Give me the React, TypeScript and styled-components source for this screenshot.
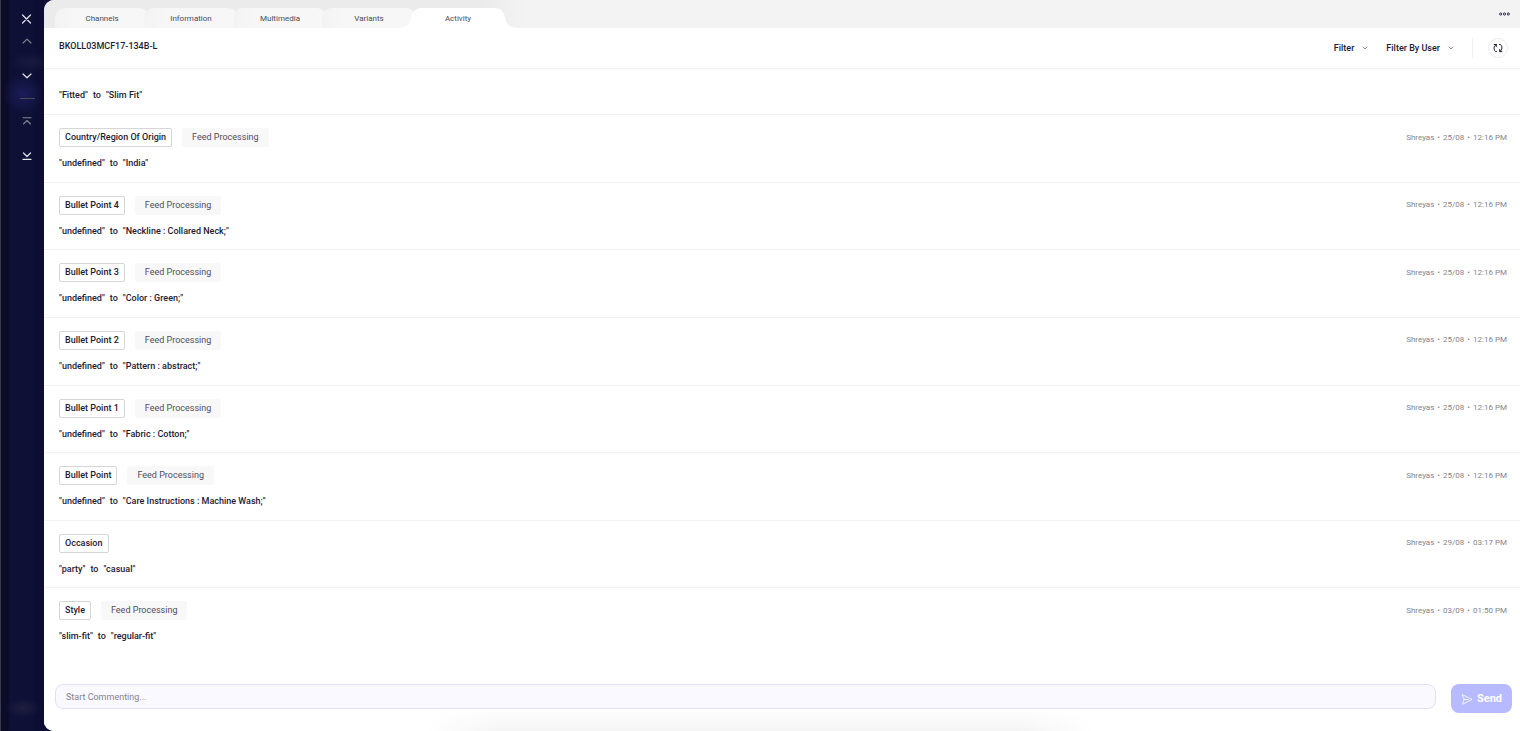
import React from 'react';
import styled, { createGlobalStyle, css } from 'styled-components';

const GlobalStyle = createGlobalStyle`
  * { box-sizing: border-box; }
  body { margin: 0; background: #0e1036; }
  body, button, input, select {
    font-family: Roboto, "Liberation Sans", sans-serif;
    font-size: 9px;
    color: #1d1a33;
  }
  button { border: 0; padding: 0; background: none; cursor: pointer; }
`;

const Page = styled.div`
  display: flex;
  min-height: 100vh;
  background: #101036;
`;

const Rail = styled.nav`
  display: flex;
  flex: none;
  flex-direction: column;
  align-items: center;
  width: 44px;
  padding: 13px 0 0 9px;
  border-left: 1px solid #3b3b4b;
  background:
    radial-gradient(circle 20px at 22px 94px, #1b1d58, transparent),
    radial-gradient(ellipse 22px 10px at 30px 62px, #1a1a3e, transparent),
    radial-gradient(ellipse 18px 10px at 22px 708px, #1e1e3e, transparent),
    linear-gradient(90deg, #0d0c28 0 7px, #0e1036 10px 32px, #0d0d33 36px);
`;

const RailButton = styled.button<{ $dim?: boolean; $gap: number }>`
  display: flex;
  align-items: center;
  justify-content: center;
  width: 16px;
  height: 12px;
  margin-bottom: ${(p) => p.$gap}px;
  color: ${(p) => (p.$dim ? '#85858f' : '#e4e4ea')};
`;

const RailRule = styled.hr`
  width: 15px;
  margin: 0 0 16px;
  border: 0;
  border-top: 1px solid #4a4a54;
`;

const Panel = styled.main`
  display: flex;
  flex: 1;
  flex-direction: column;
  min-width: 0;
  overflow: hidden;
  border-radius: 10px 0 0 10px;
  background: #fff;
`;

const TabBar = styled.div`
  display: flex;
  align-items: center;
  justify-content: space-between;
  height: 28px;
  padding: 0 10px 0 11px;
  background: linear-gradient(90deg, #ebebeb 0 440px, #f3f3f3 480px);
`;

const Tabs = styled.div`
  display: flex;
  align-self: flex-end;
  height: 20px;
`;

const activeTab = css`
  z-index: 1;
  background: #fff;
  &::before, &::after {
    content: "";
    position: absolute;
    bottom: 0;
    width: 10px;
    height: 10px;
  }
  &::before {
    left: -10px;
    background: radial-gradient(circle at 0 0, transparent 9px, #fff 10px);
  }
  &::after {
    right: -10px;
    background: radial-gradient(circle at 100% 0, transparent 9px, #fff 10px);
  }
`;

const Tab = styled.button<{ $active?: boolean }>`
  position: relative;
  width: 94px;
  margin-right: -5px;
  border-radius: 10px 10px 0 0;
  background: linear-gradient(90deg, #f3f3f3, #f7f7f7 20px);
  font-size: 8px;
  color: #4b4a58;
  ${(p) => p.$active && activeTab}
`;

const MoreButton = styled.button`
  display: flex;
  color: #2f2b44;
`;

const Header = styled.header`
  display: flex;
  justify-content: space-between;
  height: 41px;
  padding: 0 12px 0 15px;
  border-bottom: 1px solid #f1f1f3;
`;

const Sku = styled.h1`
  margin: 0;
  padding-top: 10px;
  font-size: 9px;
  font-weight: 500;
  line-height: 16px;
`;

const Tools = styled.div`
  display: flex;
  align-items: center;
`;

const FilterButton = styled.button`
  display: flex;
  align-items: center;
  gap: 8px;
  margin-right: 18px;
  font-weight: 500;
  svg { color: #6f6d7c; }
`;

const RefreshButton = styled.button`
  display: flex;
  align-items: center;
  justify-content: center;
  width: 20px;
  height: 20px;
  border: 1px solid #ececef;
  border-radius: 50%;
`;

const ToolRule = styled.span`
  width: 1px;
  height: 20px;
  margin-right: 15px;
  background: #f0f0f2;
`;

const List = styled.ul`
  display: flex;
  flex: 1;
  flex-direction: column;
  margin: 0;
  padding: 0;
  list-style: none;
`;

const PartialEntry = styled.li`
  padding: 18px 15px 11px;
  border-bottom: 1px solid #f1f1f3;
`;

const Entry = styled.li`
  flex: 1;
  padding: 13px 13px 10px 15px;
  border-bottom: 1px solid #f1f1f3;
  &:last-child { border-bottom: 0; }
`;

const EntryHead = styled.div`
  display: flex;
  align-items: center;
  gap: 10px;
  height: 19px;
  margin-bottom: 8px;
`;

const Field = styled.span`
  padding: 0 5px;
  border: 1px solid #d5d5da;
  border-radius: 2px;
  font-weight: 500;
  line-height: 17px;
`;

const Source = styled.span`
  padding: 0 10px;
  border-radius: 2px;
  background: #f8f8f9;
  line-height: 19px;
  color: #4f4c60;
`;

const Meta = styled.span`
  display: flex;
  gap: 3px;
  margin-left: auto;
  font-size: 8px;
  line-height: 16px;
  color: #85848e;
`;

const Change = styled.p`
  display: flex;
  gap: 5px;
  margin: 0;
  font-weight: 500;
  line-height: 16px;
`;

const Composer = styled.form`
  display: flex;
  align-items: flex-start;
  gap: 15px;
  padding: 29px 8px 18px 11px;
  background:
    linear-gradient(90deg, #fff 26%, transparent 31%, transparent 66%, #fff 71%),
    linear-gradient(0deg, #f4f4f4, #fff 22px);
`;

const CommentBox = styled.input`
  flex: 1;
  min-width: 0;
  height: 25px;
  padding: 0 10px;
  border: 1px solid #e0dffc;
  border-radius: 8px;
  outline: 0;
  background: #faf9ff;
  &::placeholder { color: #85838f; opacity: 1; }
`;

const SendButton = styled.button`
  display: flex;
  align-items: center;
  justify-content: center;
  gap: 4px;
  width: 61px;
  height: 29px;
  border-radius: 8px;
  background: #b7baff;
  font-size: 11px;
  font-weight: 700;
  color: #fff;
`;

type IconProps = { d: string; w: number; h: number; stroke?: number };

const Icon = ({ d, w, h, stroke = 1 }: IconProps) => (
  <svg width={w} height={h} viewBox={`0 0 ${w} ${h}`} fill="none" stroke="currentColor"
    strokeWidth={stroke} strokeLinecap="round" strokeLinejoin="round" aria-hidden="true">
    <path d={d} />
  </svg>
);

const tabs = ['Channels', 'Information', 'Multimedia', 'Variants', 'Activity'];

type Item = { field: string; feed: boolean; from: string; to: string; date: string; time: string };

const august = { feed: true, from: 'undefined', date: '25/08', time: '12:16 PM' };

const items: Item[] = [
  { ...august, field: 'Country/Region Of Origin', to: 'India' },
  { ...august, field: 'Bullet Point 4', to: 'Neckline : Collared Neck;' },
  { ...august, field: 'Bullet Point 3', to: 'Color : Green;' },
  { ...august, field: 'Bullet Point 2', to: 'Pattern : abstract;' },
  { ...august, field: 'Bullet Point 1', to: 'Fabric : Cotton;' },
  { ...august, field: 'Bullet Point', to: 'Care Instructions : Machine Wash;' },
  { field: 'Occasion', feed: false, from: 'party', to: 'casual', date: '29/08', time: '03:17 PM' },
  { field: 'Style', feed: true, from: 'slim-fit', to: 'regular-fit', date: '03/09', time: '01:50 PM' },
];

const ChangeLine = ({ from, to }: { from: string; to: string }) => (
  <Change>
    <span>"{from}"</span>
    <span>to</span>
    <span>"{to}"</span>
  </Change>
);

export default function App() {
  return (
    <Page>
      <GlobalStyle />
      <Rail aria-label="Product navigation">
        <RailButton $gap={10} aria-label="Close"><Icon w={12} h={12} d="M1.500 2 9.500 10M9.500 2 1.500 10" stroke={1.2} /></RailButton>
        <RailButton $gap={23} $dim aria-label="Previous"><Icon w={10} h={6} d="M1 5 5 1.200 9 5" stroke={1.1} /></RailButton>
        <RailButton $gap={16} aria-label="Next"><Icon w={10} h={6} d="M1 1 5 4.800 9 1" stroke={1.2} /></RailButton>
        <RailRule />
        <RailButton $gap={23} $dim aria-label="First"><Icon w={10} h={8} d="M1 .7H9M1.500 7 5 3.500 8.500 7" stroke={1.1} /></RailButton>
        <RailButton $gap={0} aria-label="Last"><Icon w={10} h={8} d="M1 7.400H9M1.500 1 5 4.500 8.500 1" stroke={1.2} /></RailButton>
      </Rail>
      <Panel>
        <TabBar>
          <Tabs role="tablist">
            {tabs.map((t) => (
              <Tab key={t} role="tab" aria-selected={t === 'Activity'} $active={t === 'Activity'}>{t}</Tab>
            ))}
          </Tabs>
          <MoreButton aria-label="More options">
            <svg width="11" height="4" viewBox="0 0 11 4" fill="none" stroke="currentColor" aria-hidden="true">
              <circle cx="1.700" cy="2" r="1.100" /><circle cx="5.500" cy="2" r="1.100" /><circle cx="9.300" cy="2" r="1.100" />
            </svg>
          </MoreButton>
        </TabBar>
        <Header>
          <Sku>BKOLL03MCF17-134B-L</Sku>
          <Tools>
            <FilterButton>Filter <Icon w={6} h={4} d="M1 1 3 3 5 1" stroke={0.8} /></FilterButton>
            <FilterButton>Filter By User <Icon w={6} h={4} d="M1 1 3 3 5 1" stroke={0.8} /></FilterButton>
            <ToolRule />
            <RefreshButton aria-label="Refresh">
              <Icon w={10} h={10} d="M3.300 1.800V3.500M1.200 1.500H3.300M2.800 1.800C.5 3.300.4 6.800 2.600 8.500H3.500M6.500 1.500H7.400C9.600 3.200 9.500 6.700 7.200 8.300M6.700 8.200V6.500M8.800 8.600H6.700" />
            </RefreshButton>
          </Tools>
        </Header>
        <List>
          <PartialEntry><ChangeLine from="Fitted" to="Slim Fit" /></PartialEntry>
          {items.map((it) => (
            <Entry key={it.field}>
              <EntryHead>
                <Field>{it.field}</Field>
                {it.feed && <Source>Feed Processing</Source>}
                <Meta><span>Shreyas</span><span>•</span><span>{it.date}</span><span>•</span><span>{it.time}</span></Meta>
              </EntryHead>
              <ChangeLine from={it.from} to={it.to} />
            </Entry>
          ))}
        </List>
        <Composer onSubmit={(e) => e.preventDefault()}>
          <CommentBox type="text" aria-label="Comment" placeholder="Start Commenting..." />
          <SendButton type="submit">
            <Icon w={12} h={12} d="M1.500 1.700 11 6.500 1.500 11.300 3 6.500ZM3 6.500H7" stroke={0.8} />
            Send
          </SendButton>
        </Composer>
      </Panel>
    </Page>
  );
}
